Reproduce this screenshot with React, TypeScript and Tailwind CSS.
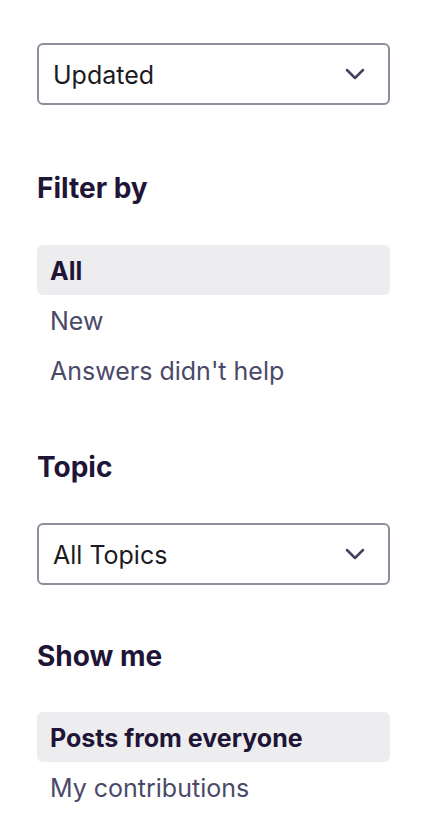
function Chevron() {
  return (
    <svg width="20" height="12" viewBox="0 0 20 12" fill="none" className="text-[#45435e]">
      <path d="M2 2l8 8 8-8" stroke="currentColor" strokeWidth="2.5" strokeLinecap="round" strokeLinejoin="round" />
    </svg>
  );
}

function Select({ value }: { value: string }) {
  return (
    <div className="flex h-[62px] items-center justify-between rounded-md border-2 border-[#8f8d9b] bg-white pl-[14px] pr-[23px]">
      <span className="pt-[1px] text-[25px] leading-[30px] text-[#1b1b1f]">{value}</span>
      <Chevron />
    </div>
  );
}

function Heading({ children }: { children: string }) {
  return <h2 className="text-[28px] font-bold leading-[30px] text-[#1f1537]">{children}</h2>;
}

function Option({ label, active = false }: { label: string; active?: boolean }) {
  return (
    <div
      className={
        active
          ? 'flex h-[50px] items-center rounded-md bg-[#ededef] px-[13px] pt-[3px] text-[25px] font-bold text-[#1f1537]'
          : 'flex h-[50px] items-center rounded-md px-[13px] pt-[3px] text-[25px] text-[#4a4a68]'
      }
    >
      {label}
    </div>
  );
}

export default function App() {
  return (
    <div className="min-h-screen bg-white px-[37px] pt-[43px]" style={{ fontFamily: 'Inter, sans-serif' }}>
      <div className="w-[353px]">
        <Select value="Updated" />

        <div className="mt-[68px]">
          <Heading>Filter by</Heading>
        </div>
        <div className="mt-[42px] flex flex-col">
          <Option label="All" active />
          <Option label="New" />
          <Option label="Answers didn't help" />
        </div>

        <div className="mt-[57px]">
          <Heading>Topic</Heading>
        </div>
        <div className="mt-[41px]">
          <Select value="All Topics" />
        </div>

        <div className="mt-[56px]">
          <Heading>Show me</Heading>
        </div>
        <div className="mt-[41px] flex flex-col">
          <Option label="Posts from everyone" active />
          <Option label="My contributions" />
        </div>
      </div>
    </div>
  );
}
